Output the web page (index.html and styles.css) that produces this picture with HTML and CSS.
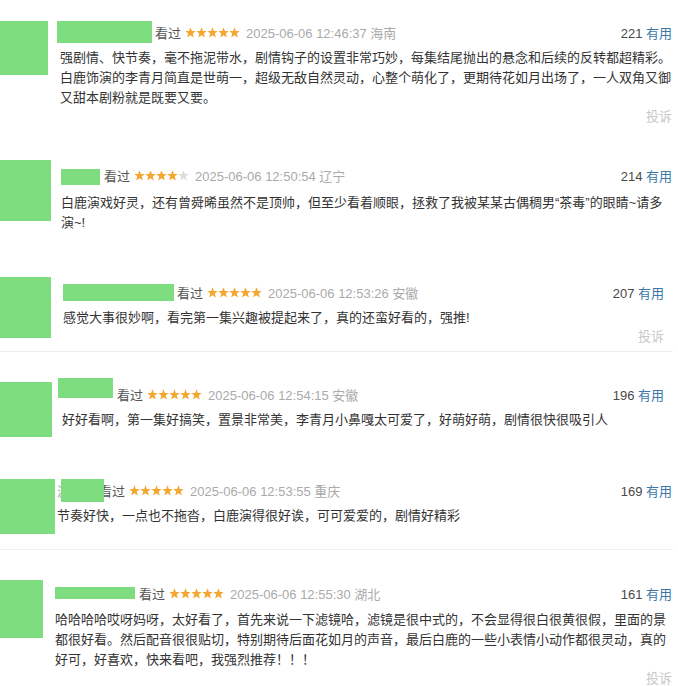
FILE: index.html
```html
<!DOCTYPE html>
<html lang="zh-CN">
<head>
<meta charset="utf-8">
<title>短评</title>
<link rel="stylesheet" href="styles.css">
</head>
<body>
<svg class="defs" aria-hidden="true"><symbol id="s" viewBox="0 0 11 11"><polygon points="5.5,0.3 6.9,3.9 10.7,4.1 7.8,6.5 8.8,10.4 5.5,8.2 2.2,10.4 3.2,6.5 0.3,4.1 4.1,3.9"/></symbol></svg>
<div class="list">
  <div class="review r1">
    <div class="avatar"></div>
    <div class="main">
      <div class="head">
        <span class="name"></span><span class="watched">看过</span>
        <span class="stars"><svg class="on"><use href="#s"/></svg><svg class="on"><use href="#s"/></svg><svg class="on"><use href="#s"/></svg><svg class="on"><use href="#s"/></svg><svg class="on"><use href="#s"/></svg></span>
        <span class="time">2025-06-06 12:46:37 海南</span>
        <span class="votes">221 <a href="#">有用</a></span>
      </div>
      <p class="content">强剧情、快节奏，毫不拖泥带水，剧情钩子的设置非常巧妙，每集结尾抛出的悬念和后续的反转都超精彩。白鹿饰演的李青月简直是世萌一，超级无敌自然灵动，心整个萌化了，更期待花如月出场了，一人双角又御又甜本剧粉就是既要又要。</p>
      <div class="foot">投诉</div>
    </div>
  </div>
  <div class="review r2">
    <div class="avatar"></div>
    <div class="main">
      <div class="head">
        <span class="name"></span><span class="watched">看过</span>
        <span class="stars"><svg class="on"><use href="#s"/></svg><svg class="on"><use href="#s"/></svg><svg class="on"><use href="#s"/></svg><svg class="on"><use href="#s"/></svg><svg class="off"><use href="#s"/></svg></span>
        <span class="time">2025-06-06 12:50:54 辽宁</span>
        <span class="votes">214 <a href="#">有用</a></span>
      </div>
      <p class="content">白鹿演戏好灵，还有曾舜晞虽然不是顶帅，但至少看着顺眼，拯救了我被某某古偶稠男“茶毒”的眼睛~请多演~!</p>
    </div>
  </div>
  <div class="review r3">
    <div class="avatar"></div>
    <div class="main">
      <div class="head">
        <span class="name"></span><span class="watched">看过</span>
        <span class="stars"><svg class="on"><use href="#s"/></svg><svg class="on"><use href="#s"/></svg><svg class="on"><use href="#s"/></svg><svg class="on"><use href="#s"/></svg><svg class="on"><use href="#s"/></svg></span>
        <span class="time">2025-06-06 12:53:26 安徽</span>
        <span class="votes">207 <a href="#">有用</a></span>
      </div>
      <p class="content">感觉大事很妙啊，看完第一集兴趣被提起来了，真的还蛮好看的，强推!</p>
      <div class="foot">投诉</div>
    </div>
  </div>
  <div class="review r4">
    <div class="avatar"></div>
    <div class="main">
      <div class="head">
        <span class="name"></span><span class="watched">看过</span>
        <span class="stars"><svg class="on"><use href="#s"/></svg><svg class="on"><use href="#s"/></svg><svg class="on"><use href="#s"/></svg><svg class="on"><use href="#s"/></svg><svg class="on"><use href="#s"/></svg></span>
        <span class="time">2025-06-06 12:54:15 安徽</span>
        <span class="votes">196 <a href="#">有用</a></span>
      </div>
      <p class="content">好好看啊，第一集好搞笑，置景非常美，李青月小鼻嘎太可爱了，好萌好萌，剧情很快很吸引人</p>
    </div>
  </div>
  <div class="review r5">
    <div class="avatar"></div>
    <div class="main">
      <div class="head">
        <span class="peek">滤</span><span class="name"></span><span class="watched">看过</span>
        <span class="stars"><svg class="on"><use href="#s"/></svg><svg class="on"><use href="#s"/></svg><svg class="on"><use href="#s"/></svg><svg class="on"><use href="#s"/></svg><svg class="on"><use href="#s"/></svg></span>
        <span class="time">2025-06-06 12:53:55 重庆</span>
        <span class="votes">169 <a href="#">有用</a></span>
      </div>
      <p class="content">节奏好快，一点也不拖沓，白鹿演得很好诶，可可爱爱的，剧情好精彩</p>
    </div>
  </div>
  <div class="review r6">
    <div class="avatar"></div>
    <div class="main">
      <div class="head">
        <span class="name"></span><span class="watched">看过</span>
        <span class="stars"><svg class="on"><use href="#s"/></svg><svg class="on"><use href="#s"/></svg><svg class="on"><use href="#s"/></svg><svg class="on"><use href="#s"/></svg><svg class="on"><use href="#s"/></svg></span>
        <span class="time">2025-06-06 12:55:30 湖北</span>
        <span class="votes">161 <a href="#">有用</a></span>
      </div>
      <p class="content">哈哈哈哈哎呀妈呀，太好看了，首先来说一下滤镜哈，滤镜是很中式的，不会显得很白很黄很假，里面的景都很好看。然后配音很很贴切，特别期待后面花如月的声音，最后白鹿的一些小表情小动作都很灵动，真的好可，好喜欢，快来看吧，我强烈推荐！！！</p>
      <div class="foot">投诉</div>
    </div>
  </div>
</div>
</body>
</html>
```
FILE: styles.css
```css
* { box-sizing: border-box; margin: 0; padding: 0; }
html, body { background: #fff; }
body {
  width: 678px;
  height: 686px;
  overflow: hidden;
  font-family: "Liberation Sans", "Noto Sans CJK SC", sans-serif;
  font-size: 13px;
  color: #333;
}
.defs { display: none; }
.list { width: 673px; display: flex; flex-direction: column; }
.review { display: flex; align-items: flex-start; padding-right: 1px; }
.avatar { flex: none; background: #7ddd7f; }
.main { flex: 1; min-width: 0; }
.head { display: flex; align-items: center; height: 22px; white-space: nowrap; }
.name { flex: none; background: #7ddd7f; margin-right: 3px; position: relative; z-index: 1; }
.peek { color: #999; flex: none; }
.watched { color: #555; }
.stars { display: flex; margin: 0 6px 0 4px; }
.stars svg { width: 11px; height: 11px; display: block; }
.stars .on { fill: #f4a831; }
.stars .off { fill: #ddd; }
.time { color: #aaa; }
.votes { margin-left: auto; color: #494949; }
.votes a { color: #3b77a8; text-decoration: none; }
.content { line-height: 20px; margin-top: 5px; color: #333; }
.foot { height: 18px; line-height: 18px; text-align: right; color: #c8c8c8; }

.r1 { margin-top: 21px; }
.r1 .avatar { width: 48px; height: 54px; }
.r1 .main { margin-left: 12px; }
.r1 .name { width: 95px; height: 22px; margin-left: -3px; }

.r2 { margin-top: 34px; }
.r2 .avatar { width: 51px; height: 61px; }
.r2 .main { margin-left: 10px; padding-top: 4px; }
.r2 .name { width: 39px; height: 16px; margin-top: 4px; margin-right: 4px; }
.r2 .content { margin-top: 7px; }

.r3 { margin-top: 44px; padding-right: 9px; padding-bottom: 5px; border-bottom: 1px solid #eee; }
.r3 .avatar { width: 51px; height: 61px; }
.r3 .main { margin-left: 12px; padding-top: 4px; }
.r3 .name { width: 111px; height: 17px; }

.r4 { margin-top: 30px; padding-right: 9px; }
.r4 .avatar { width: 52px; height: 55px; }
.r4 .main { margin-left: 10px; padding-top: 1px; }
.r4 .name { width: 55px; height: 20px; margin-left: -4px; margin-bottom: 12px; margin-right: 4px; }

.r5 { margin-top: 42px; padding-bottom: 15px; border-bottom: 1px solid #eee; }
.r5 .avatar { width: 55px; height: 55px; }
.r5 .main { margin-left: 2px; }
.r5 .name { width: 43px; height: 23px; margin-left: -9px; margin-right: -5px; }

.r6 { margin-top: 30px; }
.r6 .avatar { width: 43px; height: 58px; }
.r6 .main { margin-left: 12px; padding-top: 2px; }
.r6 .name { width: 80px; height: 12px; margin-right: 4px; }
.r6 .content { margin-top: 6px; }
```
